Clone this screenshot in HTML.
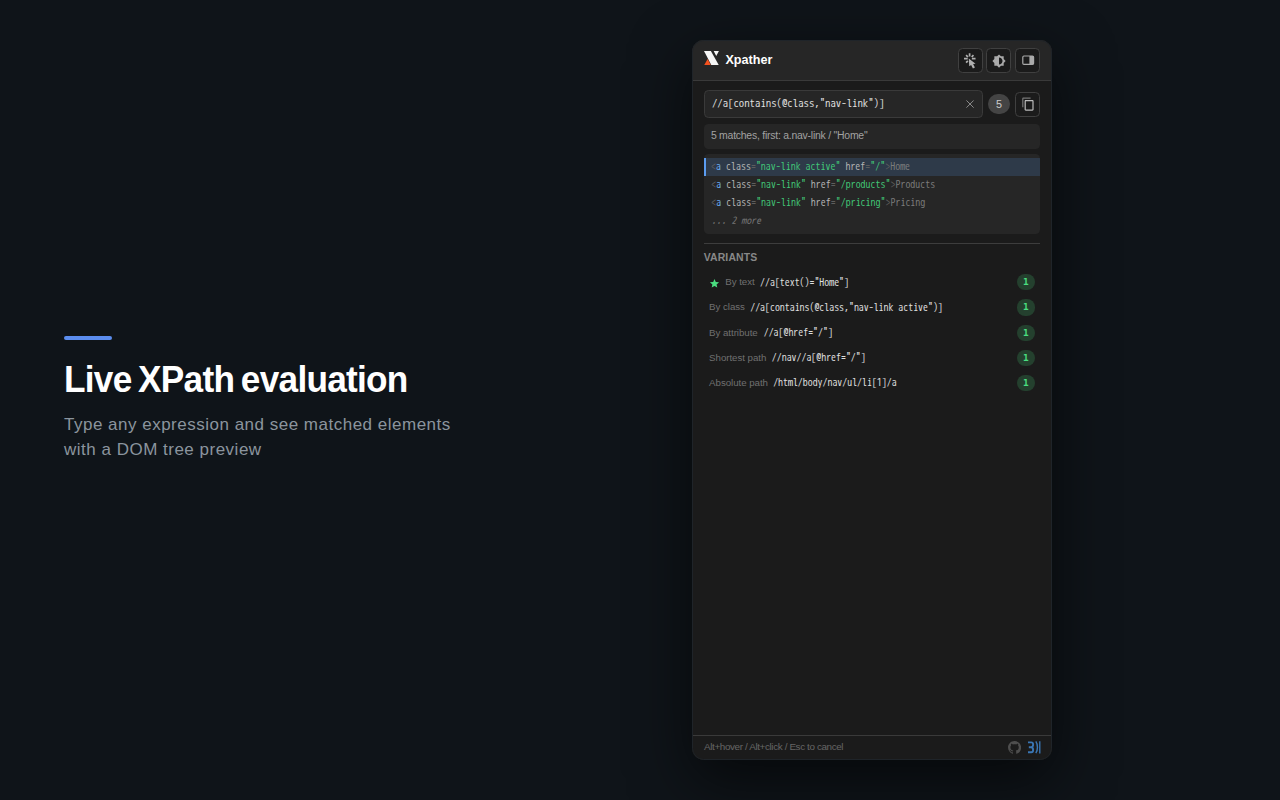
<!DOCTYPE html>
<html lang="en">
<head>
<meta charset="utf-8">
<title>Xpather - Live XPath evaluation</title>
<style>
*{box-sizing:border-box;margin:0;padding:0}
html,body{width:1280px;height:800px;overflow:hidden}
body{background:#0f1419;font-family:"Liberation Sans",sans-serif;position:relative;color:#e0e0e0}
.mono{font-family:"WenQuanYi Zen Hei Mono","Noto Sans Mono CJK SC","IPAGothic","Liberation Mono",monospace}

/* left copy */
.accent{position:absolute;left:64px;top:336px;width:48px;height:4px;border-radius:2px;background:#5b8dee}
h1{position:absolute;left:64px;top:358px;font-size:36px;line-height:44px;font-weight:700;color:#fff;letter-spacing:-.75px;word-spacing:-2.5px;white-space:nowrap;transform:scaleX(.978);transform-origin:0 0}
.sub{position:absolute;left:64px;top:412px;font-size:17px;letter-spacing:.5px;line-height:25px;color:#8b949e;white-space:nowrap}

/* panel: 400x800 design, scaled to 360x720 */
.wrap{position:absolute;left:692px;top:40px;width:360px;height:720px}
.panel{position:absolute;left:0;top:0;width:400px;height:800px;zoom:.9;border-radius:13px;background:#1b1b1b;box-shadow:0 22px 66px rgba(0,0,0,.6);overflow:hidden}
.panel>*{position:absolute}
.edge{left:0;top:0;width:400px;height:800px;border:1px solid #1f2429;border-radius:13px}
.hdr{left:0;top:0;width:400px;height:46px;background:#262626;border-bottom:1px solid #3a3a3a}
.logo{left:13.700px;top:12.300px;width:16.600px;height:16px}
.title{left:37.200px;top:14px;font-size:14px;line-height:16px;font-weight:700;color:#fff;white-space:nowrap}
.tb{top:9px;width:28px;height:28px;border:1px solid #404040;border-radius:5px;background:#1b1b1b}
.tb svg{position:absolute;left:5px;top:5px;width:16px;height:16px}

.inp{left:13px;top:56px;width:310px;height:31px;border:1px solid #3a3a3a;border-radius:5px;background:#262626}
.inp .txt{position:absolute;left:8px;top:5.500px;font-size:12px;line-height:18px;color:#e0e0e0;white-space:pre}
.inp svg{position:absolute;left:290.500px;top:10.100px;width:9px;height:9px}
.cnt{left:329px;top:60.500px;width:24px;height:22px;border-radius:11px;background:#444;color:#ccc;font-size:12px;font-weight:400;line-height:22.600px;text-align:center}
.copy{left:359px;top:57.500px;width:28px;height:28px;border:1px solid #404040;border-radius:5px;background:#1b1b1b}
.copy svg{position:absolute;left:5px;top:5px;width:16px;height:16px}

.status{left:13px;top:93px;width:374px;height:28px;border-radius:5px;background:#262626;color:#a2a2a2;font-size:11.600px;letter-spacing:-.26px;line-height:26px;padding-left:8px;white-space:nowrap}

.tree{left:13px;top:127px;width:374px;height:88.300px;border-radius:5px;background:#262626;padding:4px 0;overflow:hidden}
.row{height:20px;line-height:20px;font-size:11px;padding-left:8.500px;letter-spacing:.04px;white-space:pre;color:#b4b4b4}
.row.sel{background:#2e3a49;border-left:2.500px solid #5b9cf0;padding-left:6px}
.p{color:#5e5e5e}.t{color:#6cb0f5}.v{color:#42c878}.x{color:#7c7c7c}
.row.more{color:#777;font-style:italic}

.sep{left:13px;top:225.600px;width:374px;height:1px;background:#3d3d3d}
.vh{left:13px;top:236px;font-size:11.600px;line-height:13px;font-weight:700;color:#888;letter-spacing:.15px}
.vr{left:13px;width:374px;height:26px;line-height:26px;font-size:11px;white-space:nowrap}
.vr>*{position:absolute}
.vr .lb{left:6px;top:-.6px;color:#707070;font-size:10.800px;letter-spacing:-.05px}
.vr .ex{top:0;color:#e0e0e0;white-space:pre}
.vr .bd{right:6px;top:4px;width:20px;height:18px;border-radius:9px;background:#24402e;color:#4ade80;font-family:"DejaVu Sans Mono","Liberation Mono",monospace;font-weight:700;font-size:10.500px;line-height:18px;text-align:center}
.vr svg{left:5.700px;top:7.700px;width:12.200px;height:12.200px}

.ftr{left:0;top:772.500px;width:400px;height:27.500px;border-top:1px solid #3a3a3a;background:#1b1b1b}
.ftr>*{position:absolute}
.ftr .ft{left:13.400px;top:-1.5px;font-size:11px;letter-spacing:-.42px;line-height:26px;color:#666;white-space:nowrap}
</style>
</head>
<body>
<div class="accent"></div>
<h1>Live XPath evaluation</h1>
<p class="sub">Type any expression and see matched elements<br>with a DOM tree preview</p>

<div class="wrap"><div class="panel">
  <div class="hdr"></div>
  <svg class="logo" viewBox="0 0 16 16" preserveAspectRatio="none"><path d="M0 0h7.400L16 16H8z" fill="#f5f5f5"/><path d="M10.400 0H16l-2.900 5.600z" fill="#f5f5f5"/><path d="M0 16L3.900 8.800 7.400 16z" fill="#f4511e"/></svg>
  <div class="title">Xpather</div>
  <div class="tb" style="left:295px"><svg style="left:-1px;top:-1px;width:28px;height:28px" viewBox="0 0 28 28"><g stroke="#b0b0b0" stroke-width="1.900" fill="none"><path d="M12.900 5.800v3.700M6.700 11.900h4.100M15.400 11.900h4.100M9 7.900l2 2.100M15.200 10l2-2.100M9 16.300l2-2"/></g><path d="M12 11.600l.5 8.700 2.100-1.500 2 4 2.200-1.100-2-3.900 2.700-.2z" fill="#b0b0b0"/></svg></div>
  <div class="tb" style="left:327px"><svg style="left:5.200px;top:5px;width:15.600px;height:15.600px" viewBox="0 0 24 24"><path d="M20 15.310L23.310 12 20 8.690V4h-4.690L12 .690 8.690 4H4v4.690L.690 12 4 15.310V20h4.690L12 23.310 15.310 20H20v-4.690zM12 18V6c3.310 0 6 2.690 6 6s-2.690 6-6 6z" fill="#aaa"/></svg></div>
  <div class="tb" style="left:359px"><svg style="top:4.800px" viewBox="0 0 24 24"><rect x="3" y="5" width="18" height="14" rx="2" fill="none" stroke="#aaa" stroke-width="2"/><rect x="14" y="5" width="7" height="14" fill="#aaa"/></svg></div>

  <div class="inp"><span class="txt mono">//a[contains(@class,"nav-link")]</span><svg viewBox="0 0 9 9"><path d="M.5.500l8 8M8.500.500l-8 8" stroke="#8c8c8c" stroke-width="1.100" fill="none"/></svg></div>
  <div class="cnt">5</div>
  <div class="copy"><svg viewBox="0 0 24 24"><path d="M16 1H4c-1.100 0-2 .900-2 2v14h2V3h12V1z" fill="#777"/><path d="M19 5H8c-1.100 0-2 .900-2 2v14c0 1.100.900 2 2 2h11c1.100 0 2-.900 2-2V7c0-1.100-.900-2-2-2zm0 16H8V7h11v14z" fill="#bbb"/></svg></div>

  <div class="status">5 matches, first: a.nav-link / "Home"</div>

  <div class="tree mono">
    <div class="row sel"><span class="p">&lt;</span><span class="t">a</span> class<span class="p">=</span><span class="v">"nav-link active"</span> href<span class="p">=</span><span class="v">"/"</span><span class="p">&gt;</span><span class="x">Home</span></div>
    <div class="row"><span class="p">&lt;</span><span class="t">a</span> class<span class="p">=</span><span class="v">"nav-link"</span> href<span class="p">=</span><span class="v">"/products"</span><span class="p">&gt;</span><span class="x">Products</span></div>
    <div class="row"><span class="p">&lt;</span><span class="t">a</span> class<span class="p">=</span><span class="v">"nav-link"</span> href<span class="p">=</span><span class="v">"/pricing"</span><span class="p">&gt;</span><span class="x">Pricing</span></div>
    <div class="row more">... 2 more</div>
  </div>

  <div class="sep"></div>
  <div class="vh">VARIANTS</div>

  <div class="vr" style="top:256.300px"><svg viewBox="0 0 24 24"><path d="M12 17.270L18.180 21l-1.640-7.030L22 9.240l-7.190-.610L12 2 9.190 8.630 2 9.240l5.460 4.730L5.820 21z" fill="#4ade80"/></svg><span class="lb" style="left:24px">By text</span><span class="ex mono" style="left:62.7px">//a[text()="Home"]</span><span class="bd">1</span></div>
  <div class="vr" style="top:284.300px"><span class="lb">By class</span><span class="ex mono" style="left:51.7px">//a[contains(@class,"nav-link active")]</span><span class="bd">1</span></div>
  <div class="vr" style="top:312.300px"><span class="lb">By attribute</span><span class="ex mono" style="left:66.7px">//a[@href="/"]</span><span class="bd">1</span></div>
  <div class="vr" style="top:340.300px"><span class="lb">Shortest path</span><span class="ex mono" style="left:75.7px">//nav//a[@href="/"]</span><span class="bd">1</span></div>
  <div class="vr" style="top:368.300px"><span class="lb">Absolute path</span><span class="ex mono" style="left:77.2px">/html/body/nav/ul/li[1]/a</span><span class="bd">1</span></div>

  <div class="ftr">
    <span class="ft">Alt+hover / Alt+click / Esc to cancel</span>
    <svg style="left:350.800px;top:5.400px;width:14.600px;height:14.600px" viewBox="0 0 16 16"><path fill="#4e4e4e" d="M8 0C3.580 0 0 3.580 0 8c0 3.540 2.290 6.530 5.470 7.590.4.070.550-.170.550-.380 0-.190-.010-.820-.010-1.490-2.010.370-2.530-.490-2.690-.940-.090-.230-.480-.940-.820-1.130-.280-.150-.680-.520-.010-.530.630-.010 1.080.580 1.230.820.720 1.210 1.870.870 2.330.660.070-.520.280-.870.510-1.070-1.780-.2-3.640-.890-3.640-3.950 0-.870.310-1.590.820-2.150-.080-.2-.360-1.020.080-2.120 0 0 .670-.210 2.200.820.640-.180 1.320-.270 2-.270s1.360.090 2 .270c1.530-1.040 2.200-.820 2.200-.820.440 1.100.160 1.920.080 2.120.510.560.820 1.270.820 2.150 0 3.070-1.870 3.750-3.650 3.950.290.250.540.730.540 1.480 0 1.070-.010 1.930-.010 2.200 0 .210.150.460.550.380A8.013 8.013 0 0016 8c0-4.420-3.580-8-8-8z"/></svg>
    <svg style="left:373.300px;top:5.600px;width:14px;height:14px" viewBox="0 0 14 14"><g fill="none" stroke="#3a76b4"><path stroke-width="2.100" d="M0 1.500H3.600C5.200 1.500 5.700 2.600 5.700 4C5.700 5.500 4.900 6.900 3.600 7H.9M3.600 7C4.900 7.100 5.700 8.500 5.700 10C5.700 11.400 5.200 12.500 3.600 12.500H0"/><path d="M8.700.5C11.100 4 11.100 10 8.700 13.500" stroke-width="1.600"/><path d="M13.100.2v13.600" stroke-width="1.500"/></g></svg>
  </div>
  <div class="edge"></div>
</div></div>
</body>
</html>
